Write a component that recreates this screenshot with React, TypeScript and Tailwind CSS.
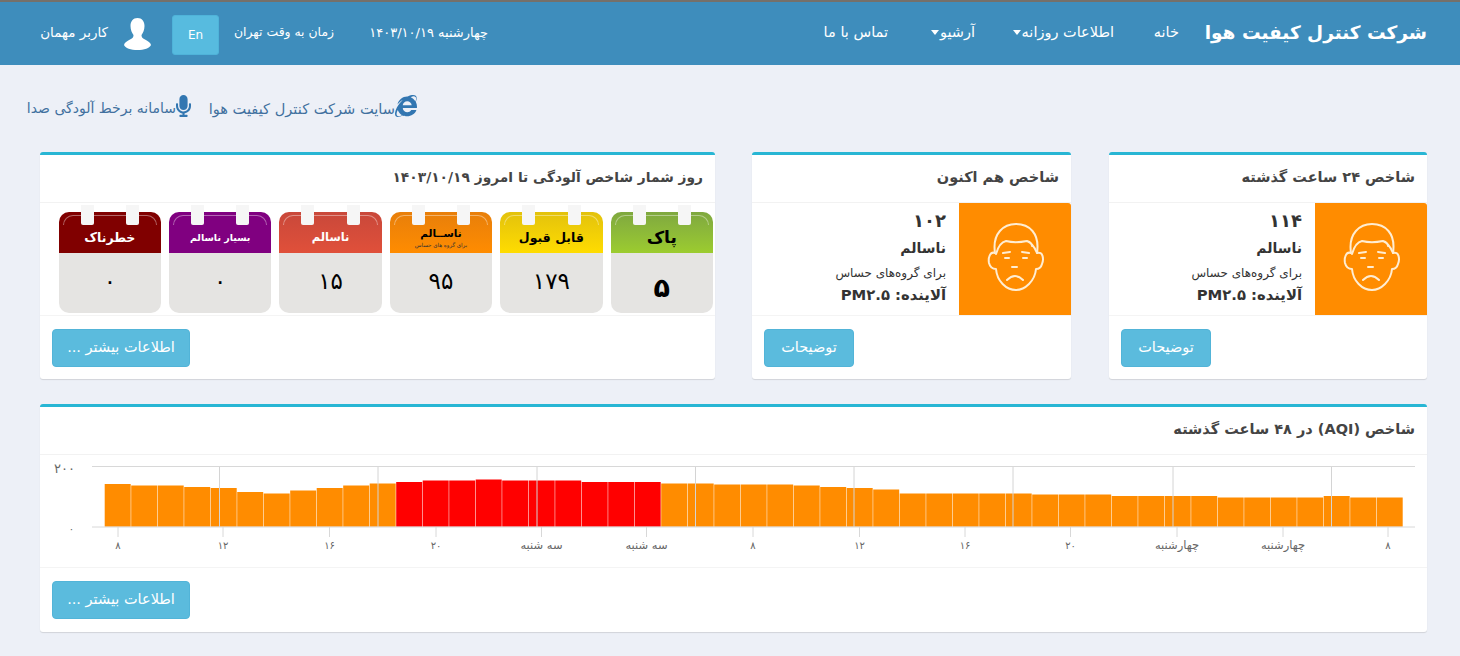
import { FaInternetExplorer, FaMicrophone } from "react-icons/fa";

const tiles = [
  { name: "پاک", value: "۵", head: "bg-gradient-to-b from-[#7fa83f] to-[#9ccc2e]", nameClass: "text-black text-[17px] font-bold", valueClass: "text-[27px] font-bold pt-[10px]" },
  { name: "قابل قبول", value: "۱۷۹", head: "bg-gradient-to-b from-[#e3c20c] to-[#ffdc00]", nameClass: "text-black text-[12.5px] font-bold", valueClass: "text-[23px] pb-[3px]" },
  { name: "ناســالم", sub: "برای گروه های حساس", value: "۹۵", head: "bg-gradient-to-b from-[#e87f0a] to-[#ff8c00]", nameClass: "text-black text-[10.5px] font-bold", valueClass: "text-[23px] pb-[3px]" },
  { name: "ناسالم", value: "۱۵", head: "bg-gradient-to-b from-[#c9483a] to-[#e0503a]", nameClass: "text-white text-[11.5px] font-bold", valueClass: "text-[23px] pb-[3px]" },
  { name: "بسیار ناسالم", value: "۰", head: "bg-[#800080]", nameClass: "text-white text-[9.5px] font-bold", valueClass: "text-[23px] pb-[3px]" },
  { name: "خطرناک", value: "۰", head: "bg-[#800000]", nameClass: "text-white text-[12.5px] font-bold", valueClass: "text-[23px] pb-[3px]" },
];

// bar tops in the chart's own coordinates, oldest first
const barTops = [
  484, 485.5, 485.5, 487, 488, 492, 493.5, 490.5, 488, 485.5, 483.5, 482, 480.5, 480.5, 479.5, 480.5, 480.5, 480.5, 482, 482, 482,
  483.5, 483.5, 484.5, 484.5, 484.5, 485.5, 487, 488, 489.5, 493.5, 493.5, 493.5, 493.5, 493.5, 494.5, 494.5, 494.5, 496, 496, 496,
  496, 497.5, 497.5, 497.5, 497.5, 496, 497.5, 497.5,
];

const gridX = [219.5, 378, 537, 695.5, 854, 1013, 1173, 1331.5];

const xLabels = [
  { x: 118, text: "۸" },
  { x: 223, text: "۱۲" },
  { x: 329.5, text: "۱۶" },
  { x: 436, text: "۲۰" },
  { x: 541.5, text: "سه شنبه" },
  { x: 646.5, text: "سه شنبه" },
  { x: 753, text: "۸" },
  { x: 859.5, text: "۱۲" },
  { x: 965, text: "۱۶" },
  { x: 1070.5, text: "۲۰" },
  { x: 1177, text: "چهارشنبه" },
  { x: 1283, text: "چهارشنبه" },
  { x: 1388, text: "۸" },
];

function Caret() {
  return <span className="inline-block w-0 h-0 border-x-[4px] border-x-transparent border-t-[5px] border-t-white" />;
}

function SadFace() {
  return (
    <svg viewBox="0 0 112 112" className="w-[112px] h-[112px]" fill="none" stroke="#ffedd2" strokeWidth="2" strokeLinecap="round" strokeLinejoin="round">
      <path d="M36 50C33 30 45 21 57 21C70 21 81 30 78 50C84 48 85 56 83 61C82 65 79 66 77 66C76 78 66 87 57 87C47 87 38 78 37 66C34 66 31 64 30 60C29 55 31 48 36 50Z" />
      <path d="M37 51C39 44 42 39 47 38C55 40 63 39 68 38C71 39 73 40 73 43M68 38C73 40 76 45 78 50" />
      <path d="M44 50L51 49M63 49L70 50M46 55L50 55M64 55L68 55M53 64L58 64M48 77Q56 69 64 77" />
    </svg>
  );
}

function UserIcon() {
  return (
    <svg viewBox="0 0 27 32" className="w-[27px] h-[32px]" fill="#fff">
      <path d="M13.5 0C9 0 6.5 3.5 6.5 8C6.5 12 8 15 9.5 17C9.5 19 9 20 6 21.500C3 23 0.500 24.500 0 27C1 30 7 32 13.500 32C20 32 26 30 27 27C26.500 24.500 24 23 21 21.500C18 20 17.500 19 17.500 17C19 15 20.500 12 20.500 8C20.500 3.500 18 0 13.500 0Z" />
    </svg>
  );
}

function InfoButton({ label, width }: { label: string; width: string }) {
  return (
    <button className={`${width} h-[38px] rounded-[4px] bg-[#5bbbdd] border border-[#52b4d8] text-white text-[14.5px]`}>
      {label}
    </button>
  );
}

function Card({ title, titleSize = "text-[14.5px]", footerHeight = "h-[64px]", className, children, footer }: { title: string; titleSize?: string; footerHeight?: string; className: string; children: React.ReactNode; footer: React.ReactNode }) {
  return (
    <div className={`${className} bg-white rounded-[3px] border-t-[3px] border-[#28b6d4] shadow-[0_1px_1px_rgba(0,0,0,0.12)]`}>
      <div className="h-[48px] px-[12px] pb-[2px] flex items-center border-b border-[#f2f2f2]">
        <h3 className={`${titleSize} font-bold text-[#444] whitespace-nowrap`}>{title}</h3>
      </div>
      {children}
      <div className={`${footerHeight} px-[12px] pt-[13px] border-t border-[#f4f4f4] flex justify-end`}>{footer}</div>
    </div>
  );
}

function StatCard({ title, value, className }: { title: string; value: string; className: string }) {
  return (
    <Card title={title} className={className} footer={<InfoButton label="توضیحات" width="w-[90px]" />}>
      <div className="h-[112px] flex">
        <div className="w-[112px] bg-[#ff8c00] rounded-tr-[3px] flex items-center justify-center">
          <SadFace />
        </div>
        <div className="flex-1 pr-[13px] text-[#333] flex flex-col">
          <div className="text-[18px] font-bold leading-[36px] tracking-[-1px]">{value}</div>
          <div className="text-[14px] font-bold leading-[18px]">ناسالم</div>
          <div className="text-[12px] leading-[32px]">برای گروه‌های حساس</div>
          <div className="text-[14.8px] font-bold leading-[12px]">آلاینده: PM۲.۵</div>
        </div>
      </div>
    </Card>
  );
}

function Tile({ tile }: { tile: (typeof tiles)[number] }) {
  return (
    <div className="relative w-[102.5px] h-[101px] rounded-[10px] overflow-visible">
      <div className={`${tile.head} relative h-[41px] rounded-t-[10px] flex flex-col items-center justify-center pt-[10px]`}>
        <div className="absolute top-[3px] inset-x-[4px] h-[10px] rounded-t-[10px] border-t border-x border-white/40" />
        <div className={`${tile.nameClass} leading-[15px] whitespace-nowrap`}>{tile.name}</div>
        {tile.sub && <div className="text-[5.5px] leading-[8px] text-[#333]">{tile.sub}</div>}
      </div>
      <div className={`${tile.valueClass} h-[60px] bg-[#e5e4e2] rounded-b-[10px] flex items-center justify-center text-black`}>
        {tile.value}
      </div>
      <div className="absolute -top-[7px] right-[22px] w-[13px] h-[20px] rounded-b-[2px] bg-[#f6f6f6]" />
      <div className="absolute -top-[7px] left-[22px] w-[13px] h-[20px] rounded-b-[2px] bg-[#f6f6f6]" />
    </div>
  );
}

function AqiChart() {
  return (
    <svg viewBox="40 455 1387 112" className="w-[1387px] h-[112px] block">
      <line x1="92" x2="1415" y1="466.500" y2="466.500" stroke="#d8d8d8" />
      {barTops.map((top, i) => (
        <rect
          key={i}
          x={104.7 + i * 26.5}
          y={top}
          width="26"
          height={526.7 - top}
          fill={i >= 11 && i <= 20 ? "#ff0000" : "#ff8c00"}
        />
      ))}
      {gridX.map((x) => (
        <line key={x} x1={x} x2={x} y1="467" y2="527" stroke="#d4d4d4" />
      ))}
      <line x1="92" x2="1415" y1="527" y2="527" stroke="#d8d8d8" />
      {xLabels.map((l) => (
        <g key={l.x}>
          <line x1={l.x} x2={l.x} y1="527" y2="537" stroke="#d8d8d8" />
          <text x={l.x} y="549" textAnchor="middle" fontSize={l.text.length > 2 ? "11.500" : "10"} fill="#666">
            {l.text}
          </text>
        </g>
      ))}
      <text x="75" y="473" textAnchor="start" fontSize="13" fill="#666">۲۰۰</text>
      <text x="74" y="532" textAnchor="start" fontSize="10" fill="#666">۰</text>
    </svg>
  );
}

export default function App() {
  return (
    <div dir="rtl" className="w-[1460px] h-[656px] overflow-hidden bg-[#edf0f7] font-['DejaVu_Sans',sans-serif]">
      <div className="h-[2px] bg-[#75706a]" />

      {/* top navigation */}
      <header className="h-[63px] bg-[#3e8dbc] text-white flex items-center pr-[33px] pl-[40px] text-[14.5px]">
        <div className="w-[223px] text-[18.5px] font-bold whitespace-nowrap mb-[2px]">شرکت کنترل کیفیت هوا</div>
        <nav className="flex items-center ms-[25px] mb-[2px]">
          <a className="w-[28px]">خانه</a>
          <a className="w-[100px] ms-[37px] flex items-center gap-[1px] whitespace-nowrap">
            اطلاعات روزانه <Caret />
          </a>
          <a className="w-[47px] ms-[39px] flex items-center gap-[1px]">
            آرشیو <Caret />
          </a>
          <a className="w-[63px] ms-[40px] whitespace-nowrap">تماس با ما</a>
        </nav>
        <div className="ms-auto flex items-center">
          <div className="w-[118px] text-[13px] whitespace-nowrap mb-[2px]">چهارشنبه ۱۴۰۳/۱۰/۱۹</div>
          <div className="w-[99px] ms-[36px] text-[12.4px] whitespace-nowrap mb-[2px]">زمان به وقت تهران</div>
          <button className="w-[47px] h-[40px] ms-[16px] mt-[2px] rounded-[3px] bg-[#57bbdf] border border-[#4fb3d9] text-white text-[12px]">En</button>
          <div className="ms-[21px] flex">
            <UserIcon />
          </div>
          <div className="w-[68px] ms-[16px] text-[13.5px] whitespace-nowrap mb-[2px]">کاربر مهمان</div>
        </div>
      </header>

      <main className="pr-[33px] pl-[33px]">
        {/* external links */}
        <div className="h-[87px] flex items-start justify-end text-[#41709f]">
          <div className="flex items-center mt-[30px] ml-[-5px]">
            <FaInternetExplorer className="w-[22px] h-[22px] text-[#3276b1] mb-[5px]" />
            <a className="w-[187px] text-[14.6px] whitespace-nowrap">سایت شرکت کنترل کیفیت هوا</a>
            <FaMicrophone className="w-[15px] h-[22px] ms-[17px] text-[#3276b1] mb-[5px]" />
            <a className="w-[148px] text-[14px] whitespace-nowrap">سامانه برخط آلودگی صدا</a>
          </div>
        </div>

        <div className="flex">
          <StatCard title="شاخص ۲۴ ساعت گذشته" value="۱۱۴" className="w-[318px]" />
          <StatCard title="شاخص هم اکنون" value="۱۰۲" className="w-[319px] ms-[38px]" />
          <Card
            title="روز شمار شاخص آلودگی تا امروز ۱۴۰۳/۱۰/۱۹"
            titleSize="text-[13.8px]"
            className="w-[675px] ms-[37px]"
            footer={<InfoButton label="اطلاعات بیشتر ..." width="w-[138px]" />}
          >
            <div className="h-[112px] flex gap-[7.9px] pr-[2px] pt-[9px]">
              {tiles.map((t) => (
                <Tile key={t.name + t.value} tile={t} />
              ))}
            </div>
          </Card>
        </div>

        <Card
          title="شاخص (AQI) در ۴۸ ساعت گذشته"
          footerHeight="h-[65px]"
          className="w-[1387px] mt-[25px]"
          footer={<InfoButton label="اطلاعات بیشتر ..." width="w-[138px]" />}
        >
          <AqiChart />
        </Card>
      </main>
    </div>
  );
}
